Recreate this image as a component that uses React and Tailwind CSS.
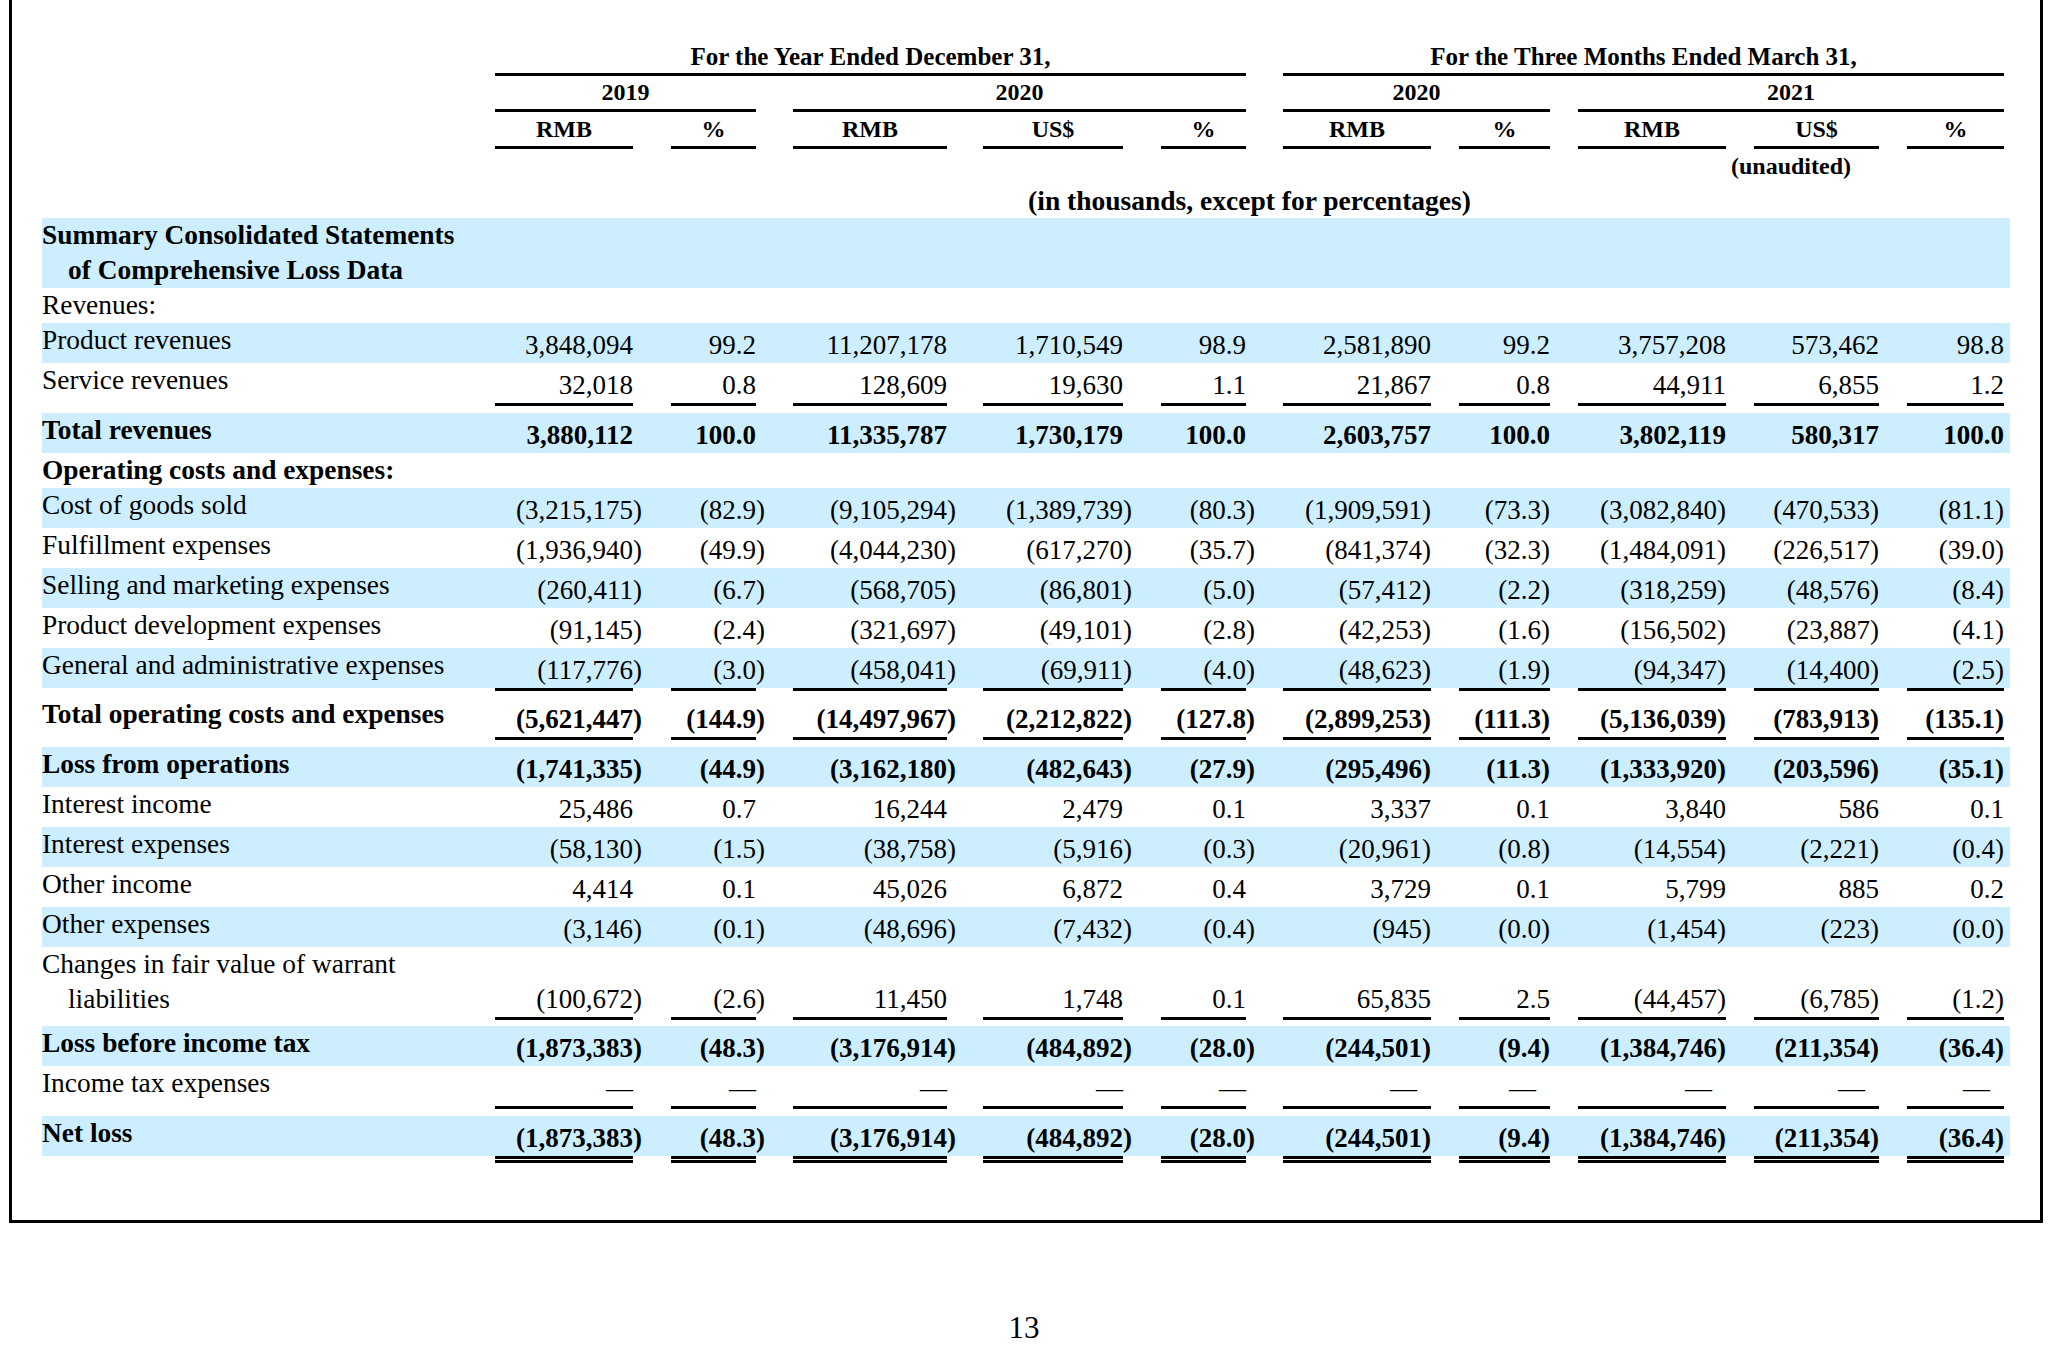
import React from "react";

const COLS = [
  "w-[138px]",
  "ml-[38px] w-[85px]",
  "ml-[37px] w-[154px]",
  "ml-[36px] w-[140px]",
  "ml-[38px] w-[85px]",
  "ml-[37px] w-[148px]",
  "ml-[28px] w-[91px]",
  "ml-[28px] w-[148px]",
  "ml-[28px] w-[125px]",
  "ml-[28px] w-[97px]",
];

const LOSS_BEFORE = ["(1,873,383)", "(48.3)", "(3,176,914)", "(484,892)", "(28.0)", "(244,501)", "(9.4)", "(1,384,746)", "(211,354)", "(36.4)"];

const ROWS = [
  { label: ["Summary Consolidated Statements", "of Comprehensive Loss Data"], bold: true, band: true },
  { label: "Revenues:" },
  { label: "Product revenues", band: true, vals: ["3,848,094", "99.2", "11,207,178", "1,710,549", "98.9", "2,581,890", "99.2", "3,757,208", "573,462", "98.8"] },
  { label: "Service revenues", under: true, vals: ["32,018", "0.8", "128,609", "19,630", "1.1", "21,867", "0.8", "44,911", "6,855", "1.2"] },
  { label: "Total revenues", bold: true, band: true, vals: ["3,880,112", "100.0", "11,335,787", "1,730,179", "100.0", "2,603,757", "100.0", "3,802,119", "580,317", "100.0"] },
  { label: "Operating costs and expenses:", bold: true },
  { label: "Cost of goods sold", band: true, vals: ["(3,215,175)", "(82.9)", "(9,105,294)", "(1,389,739)", "(80.3)", "(1,909,591)", "(73.3)", "(3,082,840)", "(470,533)", "(81.1)"] },
  { label: "Fulfillment expenses", vals: ["(1,936,940)", "(49.9)", "(4,044,230)", "(617,270)", "(35.7)", "(841,374)", "(32.3)", "(1,484,091)", "(226,517)", "(39.0)"] },
  { label: "Selling and marketing expenses", band: true, vals: ["(260,411)", "(6.7)", "(568,705)", "(86,801)", "(5.0)", "(57,412)", "(2.2)", "(318,259)", "(48,576)", "(8.4)"] },
  { label: "Product development expenses", vals: ["(91,145)", "(2.4)", "(321,697)", "(49,101)", "(2.8)", "(42,253)", "(1.6)", "(156,502)", "(23,887)", "(4.1)"] },
  { label: "General and administrative expenses", band: true, under: true, vals: ["(117,776)", "(3.0)", "(458,041)", "(69,911)", "(4.0)", "(48,623)", "(1.9)", "(94,347)", "(14,400)", "(2.5)"] },
  { label: "Total operating costs and expenses", bold: true, under: true, vals: ["(5,621,447)", "(144.9)", "(14,497,967)", "(2,212,822)", "(127.8)", "(2,899,253)", "(111.3)", "(5,136,039)", "(783,913)", "(135.1)"] },
  { label: "Loss from operations", bold: true, band: true, vals: ["(1,741,335)", "(44.9)", "(3,162,180)", "(482,643)", "(27.9)", "(295,496)", "(11.3)", "(1,333,920)", "(203,596)", "(35.1)"] },
  { label: "Interest income", vals: ["25,486", "0.7", "16,244", "2,479", "0.1", "3,337", "0.1", "3,840", "586", "0.1"] },
  { label: "Interest expenses", band: true, vals: ["(58,130)", "(1.5)", "(38,758)", "(5,916)", "(0.3)", "(20,961)", "(0.8)", "(14,554)", "(2,221)", "(0.4)"] },
  { label: "Other income", vals: ["4,414", "0.1", "45,026", "6,872", "0.4", "3,729", "0.1", "5,799", "885", "0.2"] },
  { label: "Other expenses", band: true, vals: ["(3,146)", "(0.1)", "(48,696)", "(7,432)", "(0.4)", "(945)", "(0.0)", "(1,454)", "(223)", "(0.0)"] },
  { label: ["Changes in fair value of warrant", "liabilities"], under: true, vals: ["(100,672)", "(2.6)", "11,450", "1,748", "0.1", "65,835", "2.5", "(44,457)", "(6,785)", "(1.2)"] },
  { label: "Loss before income tax", bold: true, band: true, vals: LOSS_BEFORE },
  { label: "Income tax expenses", under: true, vals: ["—", "—", "—", "—", "—", "—", "—", "—", "—", "—"] },
  { label: "Net loss", bold: true, band: true, double: true, vals: LOSS_BEFORE },
];

function Value({ v, i }) {
  const yearSection = i < 5;
  if (v === "—") {
    return <span className={yearSection ? "" : "pr-[14px]"}>—</span>;
  }
  if (yearSection && v.endsWith(")")) {
    return (
      <>
        {v.slice(0, -1)}
        <span className="inline-block w-0">)</span>
      </>
    );
  }
  return <>{v}</>;
}

function Row({ row }) {
  const lines = Array.isArray(row.label) ? row.label : [row.label];
  return (
    <>
      <div className={"flex " + (row.band ? "bg-[#cceeff]" : "")}>
        <div className={"w-[453px] shrink-0 text-[27.4px] leading-[35px] " + (row.bold ? "font-bold" : "")}>
          {lines.map((l, k) => (
            <div key={k} className={"whitespace-nowrap " + (k > 0 ? "pl-[26px]" : "")}>
              {l}
            </div>
          ))}
        </div>
        {row.vals &&
          row.vals.map((v, i) => (
            <div
              key={i}
              className={
                COLS[i] +
                " shrink-0 self-end pt-[5px] leading-[35px] text-right whitespace-nowrap " +
                (row.bold ? "font-bold" : "")
              }
            >
              <Value v={v} i={i} />
            </div>
          ))}
      </div>
      {row.under && (
        <div className="flex mb-[6.5px]">
          <div className="w-[453px] shrink-0" />
          {COLS.map((c, i) => (
            <div key={i} className={c + " shrink-0 h-[3px] bg-black"} />
          ))}
        </div>
      )}
      {row.double && (
        <div className="flex">
          <div className="w-[453px] shrink-0" />
          {COLS.map((c, i) => (
            <div key={i} className={c + " shrink-0 flex flex-col"}>
              <div className="h-[3px] bg-black" />
              <div className="h-[1px]" />
              <div className="h-[3px] bg-black" />
            </div>
          ))}
        </div>
      )}
    </>
  );
}

const H = "text-center border-b-[3px] border-black shrink-0 whitespace-nowrap";

export default function App() {
  return (
    <div
      className="w-[2048px] min-h-[1361px] bg-white text-black"
      style={{ fontFamily: '"Liberation Serif", "Times New Roman", Times, serif' }}
    >
      <div className="ml-[9px] w-[2034px] border-x-[3px] border-b-[3px] border-black pl-[30px] pt-[40px] pb-[57px]">
        <div className="w-[1968px]">
          {/* Header */}
          <div className="text-[24px] font-bold">
            <div className="flex leading-[33px] text-[25px]">
              <div className="w-[453px] shrink-0" />
              <div className={H + " w-[751px]"}>For the Year Ended December 31,</div>
              <div className={H + " ml-[37px] w-[721px]"}>For the Three Months Ended March 31,</div>
            </div>
            <div className="flex leading-[33px]">
              <div className="w-[453px] shrink-0" />
              <div className={H + " w-[261px]"}>2019</div>
              <div className={H + " ml-[37px] w-[453px]"}>2020</div>
              <div className={H + " ml-[37px] w-[267px]"}>2020</div>
              <div className={H + " ml-[28px] w-[426px]"}>2021</div>
            </div>
            <div className="flex leading-[34px]">
              <div className="w-[453px] shrink-0" />
              {["RMB", "%", "RMB", "US$", "%", "RMB", "%", "RMB", "US$", "%"].map((t, i) => (
                <div key={i} className={H + " " + COLS[i]}>
                  {t}
                </div>
              ))}
            </div>
            <div className="flex pt-[4px] leading-[27px]">
              <div className="w-[1536px] shrink-0" />
              <div className="w-[426px] shrink-0 text-center">(unaudited)</div>
            </div>
          </div>
          <div className="flex text-[27.5px] font-bold pt-[3px] leading-[35px]">
            <div className="w-[453px] shrink-0" />
            <div className="w-[1509px] shrink-0 text-center">(in thousands, except for percentages)</div>
          </div>

          {/* Body */}
          <div className="text-[27px]">
            {ROWS.map((r, k) => (
              <Row key={k} row={r} />
            ))}
          </div>
        </div>
      </div>
      <div className="mt-[87px] text-center text-[31px] leading-[36px]">13</div>
    </div>
  );
}
